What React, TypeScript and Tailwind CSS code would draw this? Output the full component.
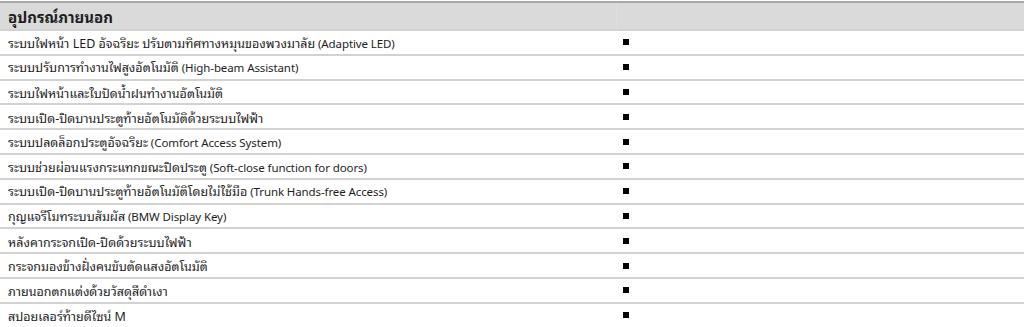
import React from 'react'

const items = [
  ['ระบบไฟหน้า LED อัจฉริยะ ปรับตามทิศทางหมุนของพวงมาลัย', '(Adaptive LED)'],
  ['ระบบปรับการทำงานไฟสูงอัตโนมัติ', '(High-beam Assistant)'],
  ['ระบบไฟหน้าและใบปัดน้ำฝนทำงานอัตโนมัติ', ''],
  ['ระบบเปิด-ปิดบานประตูท้ายอัตโนมัติด้วยระบบไฟฟ้า', ''],
  ['ระบบปลดล็อกประตูอัจฉริยะ', '(Comfort Access System)'],
  ['ระบบช่วยผ่อนแรงกระแทกขณะปิดประตู', '(Soft-close function for doors)'],
  ['ระบบเปิด-ปิดบานประตูท้ายอัตโนมัติโดยไม่ใช้มือ', '(Trunk Hands-free Access)'],
  ['กุญแจรีโมทระบบสัมผัส', '(BMW Display Key)'],
  ['หลังคากระจกเปิด-ปิดด้วยระบบไฟฟ้า', ''],
  ['กระจกมองข้างฝั่งคนขับตัดแสงอัตโนมัติ', ''],
  ['ภายนอกตกแต่งด้วยวัสดุสีดำเงา', ''],
  ['สปอยเลอร์ท้ายดีไซน์ M', ''],
]

export default function App() {
  return (
    <div className="w-[1024px] h-[327px] bg-white overflow-hidden text-[#1e1e1e]" style={{ fontFamily: '"Noto Sans Thai Looped", "Noto Sans Thai", "Noto Sans", "Liberation Sans", sans-serif' }}>
      <div className="h-[1px] bg-white" />
      <div className="h-[28px] bg-[#dadada] border-t-2 border-[#a8a8a8] grid grid-cols-[616px_1fr]">
        <div className="pl-2 flex items-center text-[15px] font-bold">อุปกรณ์ภายนอก</div>
        <div className="border-l border-[#dedede]" />
      </div>
      {items.map(([th, en], i) => (
        <div key={i} className="h-[24.8px] border-t-2 border-[#d2d2d2] grid grid-cols-[616px_1fr] items-center">
          <div className="pl-2 text-[12.5px] leading-none whitespace-nowrap">
            {th}
            {en && <span className="text-[11.5px] tracking-[-0.1px]"> {en}</span>}
          </div>
          <div className="pl-[7px] flex items-center">
            <div className="w-[6px] h-[6px] bg-black" />
          </div>
        </div>
      ))}
    </div>
  )
}
